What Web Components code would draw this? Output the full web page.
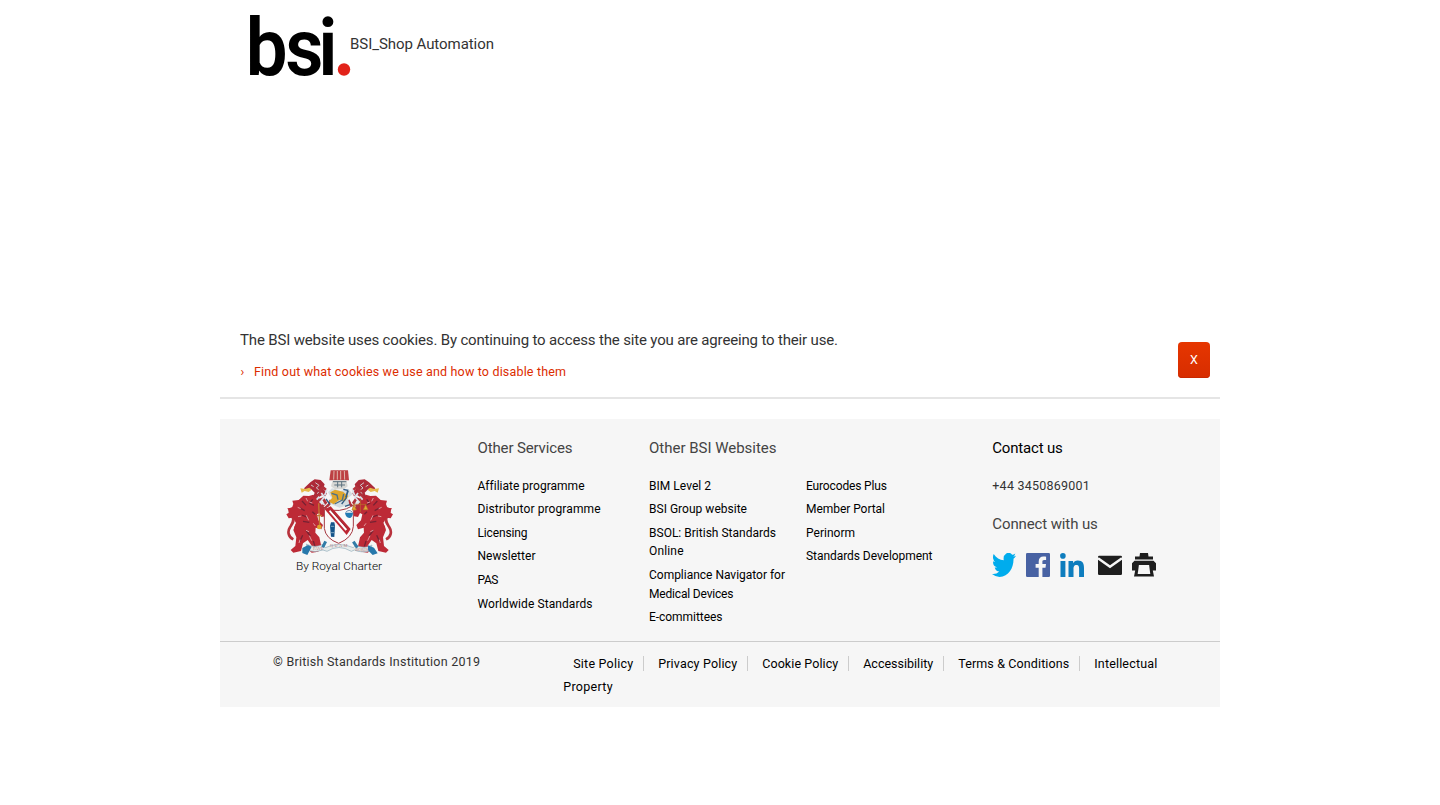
<!DOCTYPE html>
<html lang="en">
<head>
<meta charset="utf-8">
<title>BSI Shop</title>
<style>
html,body{margin:0;background:#fff}
body{font-family:Roboto,"Open Sans",sans-serif;color:#333;height:805px;overflow:hidden}
</style>
</head>
<body>
<shop-page></shop-page>
<script>
const define=(name,html,after)=>{
  const t=document.createElement('template');
  t.innerHTML=html;
  customElements.define(name,class extends HTMLElement{
    constructor(){super();this.attachShadow({mode:'open'}).append(t.content.cloneNode(true));}
    connectedCallback(){if(after)after(this);}
  });
};

/* One line of text, tracked so that it fills the width given in "w". */
define('fit-text',`<style>:host{display:inline-block;white-space:nowrap;vertical-align:top}span{display:inline-block}</style><span><slot></slot></span>`,el=>{
  const s=el.shadowRoot.querySelector('span'),w=+el.getAttribute('w'),n=el.textContent.length;
  const gap=(w-s.getBoundingClientRect().width)/(n-1);
  s.style.letterSpacing=gap+'px';
  s.style.marginRight=-gap+'px';
});

define('bsi-logo',`<style>:host{display:block;width:100px;height:64px}svg{display:block;overflow:visible}</style>
<svg width="100" height="64" viewBox="0 0 100 64"><text transform="scale(.93 1)" x="-4.500 38 73.300" y="60.500" font-family="Roboto" font-weight="600" font-size="80" fill="#000">bsi</text><circle cx="94" cy="55.500" r="6.200" fill="#e2231a"/></svg>`);

define('shop-header',`<style>:host{display:flex;height:306px;padding:14px 30px 0;box-sizing:border-box;align-items:flex-start}
fit-text{font-size:15px;line-height:20px;margin-top:20px}</style>
<bsi-logo></bsi-logo><fit-text w="144">BSI_Shop Automation</fit-text>`);

define('cookie-bar',`<style>:host{display:flex;justify-content:space-between;height:93px;box-sizing:border-box;padding:24px 10px 0 20px;border-bottom:2px solid #e5e5e5}
p{margin:0;font-size:15px;line-height:20px}
a{display:flex;margin-top:12px;font-size:12.5px;line-height:20px;color:#dc2d00}
i{font-style:normal;width:13.500px;padding-left:.5px}
button{font:12.500px/34px Roboto,sans-serif;width:32px;height:36px;margin:12px 0 0;padding:0;border:0;border-radius:4px;color:#fff;background:linear-gradient(#e63600,#d72d00);box-shadow:inset 0 -1px #c92800}</style>
<div><p><fit-text w="598">The BSI website uses cookies. By continuing to access the site you are agreeing to their use.</fit-text></p>
<a><i>›</i><fit-text w="312">Find out what cookies we use and how to disable them</fit-text></a></div><button>X</button>`);

define('royal-crest',`<style>:host{display:block;width:120px;height:118px}svg{display:block}</style>
<svg width="120" height="118" viewBox="0 0 360 354">
<defs><g id="side">
 <path d="M40 232c-16-8-18-24-10-36 7-11 14-20 8-30-5-10-12-14-8-24 9-1 10-8 19-3 9 8 2 17 7 26 4 11-5 20-9 30-4 11 4 17 12 22" fill="none" stroke="#b8323c" stroke-width="8"/>
 <path d="M56 114l14-13 17 1 13-4 13 11 8 14 10 14 8 14-3 12-12 2-6-12-7 4 4 18 14 14-5 13-17-5-1 15 12 14 6 27-9 16-20 3-9-8 9-13-12-17-14 10-6 23-23 5-8-8 14-12 3-26-9-22 8-21-9-16-13 2-7-12 10-6-7-12 14-2 4-11-3-10z" fill="#bd2a36"/>
 <path d="M66 117l12 13m-18 8l14 8m-9 13l18 7m-14 12l19 3m10-69l-9 12 13 6m-5 19l8 8m-27 48l13 17m-23-2l-9 19m41-2l5 17" stroke="#762233" stroke-width="4" fill="none"/>
 <path d="M78 108l5 10m5 2l9 3m-18 37l7 15m-8 30l9 4m-27 24l-3 10m31-22l7 15m-42-100l9 4m-8 24l10-2m36 22l6 8" stroke="#e09a9f" stroke-width="3"/>
 <path d="M91 61l13-9 18 2 12 13-5 13 12 14-5 9-14-5-9 11-14-3 5-14-12-12-13 6-7-7z" fill="#ad2a38"/>
 <path d="M106 62l11 8-8 8 12 8-10 9m-10-21l-8-5" fill="none" stroke="#cfc9cc" stroke-width="3"/>
 <path d="M61 79l14 2 13-4 7 6-9 7-12-3-9 5z" fill="#e7b94a"/>
 <path d="M138 84l-9-8-11 10 7 9-14 10 5 10 13-5 8 12-13 12 10 6 13-13 6-13" fill="none" stroke="#b2323c" stroke-width="8"/>
 <path d="M124 93l9 12-12 15 13 8m7-45l-7 17m-24 13l8-9m20 44l6-12" fill="none" stroke="#d9e4ed" stroke-width="5"/>
</g></defs>
<use href="#side"/><use href="#side" transform="matrix(-1 0 0 1 358 0)"/>
<path d="M152 25h52l3 30h-59z" fill="#bd4143"/><path d="M162 27l-1 26m11-26v26m10-26v26m11-26l1 26" stroke="#dfb7ad" stroke-width="3"/>
<path d="M158 55h41l4 18-11 9h-27l-12-9z" fill="#d8d8d5"/><path d="M159 59h40m-36 10h32m-22-10v17m12-17v17" stroke="#5d717f" stroke-width="3"/>
<path d="M144 91l12-12 25 7 25-4 12 15-14 11 4 20-29 9-29-12 4-17z" fill="#d5dce1"/>
<path d="M151 91l14-8 24 6 16 13-10 15-17-3-17 13-14-8 10-12z" fill="#dfa62d"/>
<path d="M155 94l16 5 3 14m17-17l-4 18-23 12m41-39l-8 18" fill="none" stroke="#4b7089" stroke-width="4"/>
<path d="M190 82l13 3-5 24-13 17m-47-15l12 16m60 1l-15 5" fill="none" stroke="#315a82" stroke-width="4"/>
<path d="M133 139q46 17 87-9v63q-2 34-44 51-39-14-43-45z" fill="#fafafa" stroke="#a53740" stroke-width="3"/>
<path d="M134 142l18-9 60 68-12 18z" fill="#bd2834"/><path d="M149 146l50 58" stroke="#fff" stroke-width="6"/><path d="M152 144l50 56" stroke="#7d2932" stroke-width="2"/>
<path d="M153 181h10l2 10-2 34-10-1-3-32z" fill="#16558a"/><path d="M152 193h11m-11 19h11" stroke="#80a6bf" stroke-width="3"/>
<path d="M195 152h24q-1 15-11 16-11-2-13-16z" fill="#237cb5"/><path d="M197 151q11-11 20 0" fill="none" stroke="#214d83" stroke-width="2"/>
<path d="M116 124l3 72m-9-35h16" stroke="#c37c32" stroke-width="4"/><circle cx="118" cy="195" r="7" fill="#dfa62c"/>
<path d="M219 127h41m-19-14v37m-19-22l-6 16h13zm35 0l-7 15h14z" fill="#e1ab35" stroke="#ba7429" stroke-width="2"/>
<path d="M79 246q26 14 50 1l7 10q41-19 84 0l7-8q26 14 49 0l-4 17q-28 8-49-2l-9 4q-38-23-73 0l-12-4q-23 9-46 1z" fill="#e7eceb" stroke="#8eabb9" stroke-width="2"/>
<path d="M67 258l17-9 11 5-13 25-15-6zM264 250l18 7 11 17-15 5-14-14z" fill="#2878ab"/><path d="M137 238l-9 18m92-17l12 18" stroke="#327ca7" stroke-width="9"/>
<g font-family="Liberation Serif" font-size="13" fill="#b37a7a"><text x="99" y="263">FAVE</text><text x="150" y="255" textLength="52">QUAM</text><text x="226" y="266">BORIS</text></g>
<text x="48" y="324" font-family="Roboto" font-weight="300" font-size="35" textLength="258" lengthAdjust="spacingAndGlyphs" fill="#000">By Royal Charter</text>
</svg>`);

define('link-list',`<style>:host{display:flex;flex-direction:column;gap:5px;font-size:12px;line-height:18.600px;color:#000}::slotted(div){display:flex;flex-direction:column;align-items:flex-start}</style><slot></slot>`);

define('social-icons',`<style>:host{display:flex;gap:10px;width:164px}svg{display:block}.mail{margin-left:4px}</style>
<svg width="24" height="24" viewBox="0 0 24 24"><path fill="#00aced" d="M24 4.6a10 10 0 0 1-2.8.8 5 5 0 0 0 2.1-2.7 10 10 0 0 1-3.1 1.2 4.9 4.9 0 0 0-8.4 4.5C7.7 8.2 4.1 6.200 1.700 3.200a4.900 4.900 0 0 0 1.500 6.600c-.8 0-1.600-.2-2.200-.6v.1a4.900 4.900 0 0 0 3.900 4.800c-.7.2-1.500.2-2.200.1a4.900 4.900 0 0 0 4.600 3.400A9.900 9.900 0 0 1 0 19.600 14 14 0 0 0 7.500 22C16.600 22 21.500 14.500 21.500 8V7.100A10 10 0 0 0 24 4.600z" transform="matrix(1 0 0 1.22 0 -2.9)"/></svg>
<svg width="24" height="24" viewBox="0 0 24 24"><rect width="24" height="24" rx="1.300" fill="#4862a3"/><path fill="#f6f6f6" d="M12.700 24v-9.300H9.600v-3.600h3.100V8.400c0-3.100 1.900-4.800 4.700-4.800 1.300 0 2.200.1 2.700.2V7h-1.900c-1.500 0-1.800.7-1.800 1.800v2.300H20l-.5 3.600h-3.100V24z"/></svg>
<svg width="24" height="24" viewBox="0 0 24 24"><g fill="#0e7dbe"><circle cx="2.900" cy="2.900" r="2.800"/><path d="M.5 8h4.900v16H.5zM8.500 8h4.600v2.200c.7-1.300 2.300-2.600 4.700-2.600 5 0 6.200 3.100 6.200 7.600V24h-4.900v-7.800c0-1.900 0-4.200-2.600-4.200s-3 2-3 4.100V24h-5z"/></g></svg>
<svg class="mail" width="24" height="24" viewBox="0 0 24 24"><rect y="2.800" width="24" height="19.200" rx="1.200" fill="#1e1e1e"/><path d="M0 5.200L12 13.800l12-8.600" fill="none" stroke="#f6f6f6" stroke-width="2.500"/></svg>
<svg width="24" height="24" viewBox="0 0 24 24"><path fill="#1e1e1e" d="M7.500 3.500L8 0h8l.5 3.500H21V6.500H3V3.500zM2.500 7.800h19L24 10.300v7.200h-3.200L22 23.500H2l1.200-6H0v-7.200z"/><path d="M6.900 12h10.200l1.200 9H5.700z" fill="#f6f6f6"/></svg>`);

define('footer-main',`<style>:host{display:grid;grid-template-columns:257.500px 171.500px 343.300px 1fr;height:222px;box-sizing:border-box}
royal-crest{margin:43px 0 0 60px}
section{padding-top:19px}
h3{margin:0;font-size:15px;font-weight:400;line-height:20px;color:#444}
.c{color:#000}
link-list{margin-top:18.560px}
.cols{display:grid;grid-template-columns:157px 1fr}
.tel{margin:18px 0 19px;font-size:12.500px;line-height:19px;color:#333}
social-icons{margin-top:19px}</style>
<royal-crest></royal-crest>
<section><h3><fit-text w="95">Other Services</fit-text></h3><link-list>
<div><fit-text w="106">Affiliate programme</fit-text></div><div><fit-text w="123">Distributor programme</fit-text></div><div><fit-text w="50">Licensing</fit-text></div><div><fit-text w="58">Newsletter</fit-text></div><div><fit-text w="21">PAS</fit-text></div><div><fit-text w="115">Worldwide Standards</fit-text></div></link-list></section>
<section><h3><fit-text w="127.500">Other BSI Websites</fit-text></h3><div class="cols"><link-list>
<div><fit-text w="62">BIM Level 2</fit-text></div><div><fit-text w="98">BSI Group website</fit-text></div><div><fit-text w="127">BSOL: British Standards</fit-text><fit-text w="34.500">Online</fit-text></div><div><fit-text w="136">Compliance Navigator for</fit-text><fit-text w="84.500">Medical Devices</fit-text></div><div><fit-text w="73.500">E-committees</fit-text></div></link-list>
<link-list><div><fit-text w="81">Eurocodes Plus</fit-text></div><div><fit-text w="79">Member Portal</fit-text></div><div><fit-text w="49">Perinorm</fit-text></div><div><fit-text w="126.500">Standards Development</fit-text></div></link-list></div></section>
<section><h3 class="c"><fit-text w="70.500">Contact us</fit-text></h3><p class="tel"><fit-text w="97.500">+44 3450869001</fit-text></p><h3><fit-text w="105.500">Connect with us</fit-text></h3><social-icons></social-icons></section>`);

define('footer-legal',`<style>:host{display:flex;height:66px;box-sizing:border-box;border-top:1px solid #ccc;padding:10px 0 0 53px;font-size:12.500px;color:#000}
.copy{width:290.200px;line-height:20px;color:#333}
.row{display:flex;padding:4px 0 0 10px}
.row fit-text{line-height:15px;padding-right:10px;margin-right:14px;border-right:1px solid #ccc}
.row fit-text:last-child{border:0}
.next{line-height:23px;margin-top:4px}</style>
<div class="copy"><fit-text w="207">© British Standards Institution 2019</fit-text></div>
<div><div class="row"><fit-text w="60">Site Policy</fit-text><fit-text w="79">Privacy Policy</fit-text><fit-text w="76">Cookie Policy</fit-text><fit-text w="70">Accessibility</fit-text><fit-text w="111">Terms &amp; Conditions</fit-text><fit-text w="63">Intellectual</fit-text></div><div class="next"><fit-text w="49.500">Property</fit-text></div></div>`);

define('shop-page',`<style>:host{display:block;width:1000px;margin:0 auto}footer{margin-top:20px;background:#f6f6f6}</style>
<shop-header></shop-header><cookie-bar></cookie-bar><footer><footer-main></footer-main><footer-legal></footer-legal></footer>`);
</script>
</body>
</html>
